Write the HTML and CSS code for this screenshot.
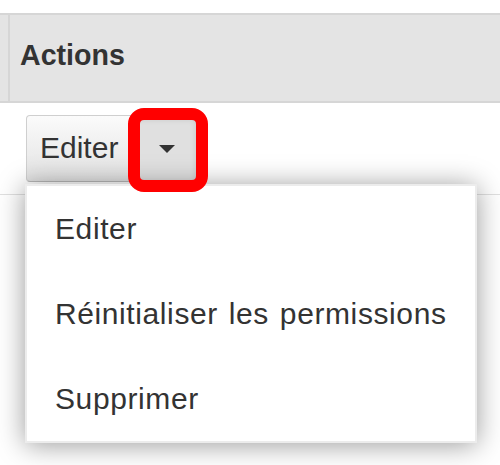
FILE: index.html
```html
<!DOCTYPE html>
<html lang="fr">
  <head>
    <meta charset="UTF-8" />
    <meta name="viewport" content="width=device-width, initial-scale=1.0" />
    <title>Actions</title>
    <link rel="stylesheet" href="styles.css">
  </head>
  <body>
    <div class="grid">
      <div class="head">
        <div class="cell-side"></div>
        <div class="cell-main">Actions</div>
      </div>
      <div class="row">
        <div class="btn-group">
          <button class="btn">Editer</button>
          <button class="btn toggle"><span class="caret"></span></button>
          <div class="highlight"></div>
          <ul class="menu">
            <li>Editer</li>
            <li>Réinitialiser les permissions</li>
            <li>Supprimer</li>
          </ul>
        </div>
      </div>
    </div>
  </body>
</html>
```

FILE: styles.css
```css
html,
body {
  min-height: 100%;
}
body {
  margin: 0;
  min-height: 465px;
  font-family: "Liberation Sans", Arial, sans-serif;
  color: #333;
  background: #fff;
}
.grid {
  padding-top: 13px;
}
.head {
  display: flex;
  background: #e4e4e4;
  border-top: 2px solid #d6d6d6;
  border-bottom: 2px solid #d6d6d6;
}
.cell-side {
  width: 8px;
  border-right: 2px solid #d6d6d6;
}
.cell-main {
  flex: 1;
  font-weight: bold;
  font-size: 28.6px;
  line-height: 32px;
  padding: 24px 10px 30px;
}
.row {
  padding: 12px 0 12px 26px;
  border-bottom: 1px solid #e0e0e0;
}
.btn-group {
  position: relative;
  display: inline-flex;
}
.btn {
  font-family: inherit;
  font-size: 30px;
  line-height: 36px;
  color: #333;
  height: 67px;
  margin: 0;
  padding: 14px 14px 15px 13px;
  border: 1px solid #cfcfcf;
  border-bottom-color: #b9b9b9;
  border-radius: 4px 0 0 4px;
  background: linear-gradient(#fbfbfb, #e2e2e2);
  width: 106px;
  text-align: left;
}
.toggle {
  display: flex;
  align-items: center;
  width: 65px;
  padding: 0 0 0 27px;
  border-left: none;
  border-radius: 0 4px 4px 0;
  background: #e0e0e0;
  box-shadow: inset 0 3px 6px rgba(0, 0, 0, 0.12);
}
.caret {
  width: 0;
  height: 0;
  border-left: 8px solid transparent;
  border-right: 8px solid transparent;
  border-top: 8px solid #333;
}
.highlight {
  position: absolute;
  left: 102px;
  top: -7px;
  width: 80px;
  height: 84px;
  box-sizing: border-box;
  border: 12px solid #ff0000;
  border-radius: 16px;
  z-index: 3;
}
.menu {
  position: absolute;
  left: -1px;
  top: 69px;
  width: 452px;
  box-sizing: border-box;
  margin: 0;
  padding: 0;
  list-style: none;
  background: #fff;
  border: 2px solid #ececec;
  box-shadow: 0 2px 26px rgba(0, 0, 0, 0.4);
  z-index: 2;
}
.menu li {
  font-size: 30px;
  line-height: 85px;
  padding-left: 28px;
  letter-spacing: 0.6px;
  word-spacing: 2px;
  white-space: nowrap;
}
```
